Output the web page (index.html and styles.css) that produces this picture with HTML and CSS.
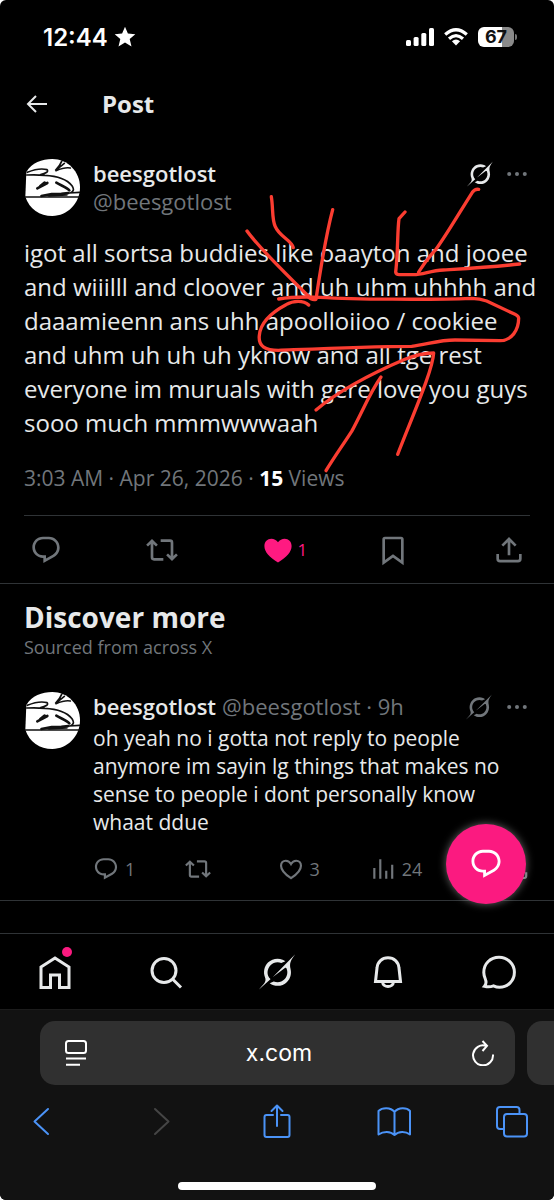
FILE: index.html
```html
<!DOCTYPE html>
<html lang="en">
<head>
<meta charset="utf-8">
<meta name="viewport" content="width=device-width, initial-scale=1">
<title>Post / X</title>
<link rel="stylesheet" href="styles.css">
</head>
<body>
<svg class="defs" aria-hidden="true">
  <symbol id="reply" viewBox="0 0 24 24"><path d="M1.751 10c0-4.42 3.584-8 8.005-8h4.366c4.49 0 8.129 3.64 8.129 8.13 0 2.96-1.607 5.68-4.196 7.11l-8.054 4.46v-3.69h-.067c-4.49.1-8.183-3.51-8.183-8.01zm8.005-6c-3.317 0-6.005 2.69-6.005 6 0 3.37 2.77 6.08 6.138 6.01l.351-.01h1.761v2.3l5.087-2.81c1.951-1.08 3.163-3.13 3.163-5.36 0-3.39-2.744-6.13-6.129-6.13H9.756z"/></symbol>
  <symbol id="repost" viewBox="0 0 24 24"><path class="line" d="M.8 8.7 4.5 5.2 8.2 8.7M4.5 5.5V17.5Q4.5 19 6 19H13M11 5H18Q19.500 5 19.500 6.500V18.500M15.800 15.300 19.500 18.800 23.200 15.300"/></symbol>
  <symbol id="heart" viewBox="0 0 24 24"><path class="line" d="M12 20.500C6 16.600 2.800 13 2.800 9 2.800 6.200 4.700 4.400 7.200 4.400 9.300 4.400 10.900 5.500 12 7.400 13.100 5.500 14.700 4.400 16.800 4.400 19.300 4.400 21.200 6.200 21.200 9 21.200 13 18 16.600 12 20.500Z"/></symbol>
  <symbol id="heart-full" viewBox="0 0 24 24"><path d="M12 21.400C5.500 17.500 1.800 13.400 1.800 9 1.800 5.600 4.100 3.500 7 3.500 9 3.500 10.800 4.400 12 6.200 13.200 4.400 15 3.500 17 3.500 19.900 3.500 22.200 5.600 22.200 9 22.200 13.400 18.500 17.500 12 21.400Z"/></symbol>
  <symbol id="bookmark" viewBox="0 0 24 24"><path class="line" d="M5 21.500V4Q5 3 6 3H18Q19 3 19 4V21.500L12 16.500Z"/></symbol>
  <symbol id="share" viewBox="0 0 24 24"><path class="line" d="M12 16V4M7 8.700 12 3.700 17 8.700M3.500 15V18.500Q3.500 20.300 5.300 20.300H18.700Q20.500 20.300 20.500 18.500V15"/></symbol>
  <symbol id="chart" viewBox="0 0 24 24"><path class="line" d="M4 21V11M9.500 21V3M15 21V13.500M20.500 21V8"/></symbol>
  <symbol id="grok" viewBox="0 0 33 32"><path d="M12.745 20.540l10.970-8.190c.539-.4 1.307-.244 1.564.380 1.349 3.288.746 7.241-1.938 9.955-2.683 2.714-6.417 3.310-9.830 1.954l-3.728 1.745c5.347 3.697 11.840 2.782 15.898-1.324 3.219-3.255 4.216-7.692 3.284-11.693l.008.009c-1.351-5.878.332-8.227 3.782-13.031L33 0l-4.540 4.590v-.014L12.743 20.544m-2.263 1.987c-3.837-3.707-3.175-9.446.1-12.755 2.420-2.449 6.388-3.448 9.852-1.979l3.720-1.737c-.670-.490-1.530-1.017-2.515-1.387-4.455-1.854-9.789-.931-13.410 2.728-3.483 3.523-4.579 8.940-2.697 13.561 1.405 3.454-.899 5.898-3.220 8.364C1.490 30.200.666 31.074 0 32l10.478-9.466"/></symbol>
  <symbol id="dots" viewBox="0 0 24 24"><circle cx="3.500" cy="12" r="2.200"/><circle cx="12" cy="12" r="2.200"/><circle cx="20.500" cy="12" r="2.200"/></symbol>
  <symbol id="face" viewBox="30 27 168 171">
    <path fill="#fff" d="M37 66C53 38 84 27 115 27 160 27 198 64 198 112S160 198 115 198C77 198 46 177 34 140Z"/>
    <g fill="none" stroke="#111" stroke-linecap="round" stroke-width="5">
      <path d="M40 67C62 58 82 54 99 59 105 65 94 71 80 74M38 75C62 74 72 74 92 76 132 78 158 87 174 107 181 117 179 125 170 128M125 60C135 50 140 42 143 34M128 59 151 40M126 62C143 55 154 51 169 54M34 141H196M166 129 196 127"/>
      <path stroke-width="8" d="M70 115 100 99M79 108 92 98M127 98C142 107 157 112 166 121"/>
      <path stroke-width="7" d="M82 138 113 132 142 131 163 129M105 137 158 134"/>
    </g>
  </symbol>
</svg>

<div class="phone">
  <header class="status">
    <div class="clock">12:44
      <svg class="star" viewBox="0 0 22 22"><path d="M11 .8 13.900 7.500 21.300 8.200 15.700 13 17.500 20.500 11 16.600 4.500 20.500 6.300 13 .7 8.200 8.100 7.500Z"/></svg>
    </div>
    <div class="signals">
      <svg class="bars" viewBox="0 0 28 18"><rect y="12" width="5" height="6" rx="1.500"/><rect x="7.600" y="9" width="5" height="9" rx="1.500"/><rect x="15.300" y="5" width="5" height="13" rx="1.500"/><rect x="23" width="5" height="18" rx="1.500"/></svg>
      <svg class="wifi" viewBox="0 0 24 18"><g fill="none" stroke="#fff" stroke-width="3.200"><path d="M1.200 6.500Q12-3 22.800 6.500M5 10.700Q12 4.500 19 10.700"/></g><path d="M7.900 13.200Q12 9.700 16.100 13.200L12 17.600Z"/></svg>
      <div class="battery"><span class="level">67</span></div>
    </div>
  </header>

  <nav class="topbar">
    <button class="icon-btn" aria-label="Back"><svg class="back" viewBox="0 0 22 18"><path d="M21 9H2M10 1 2 9 10 17"/></svg></button>
    <h1>Post</h1>
  </nav>

  <main>
    <article class="post">
      <div class="author">
        <svg class="avatar"><use href="#face"/></svg>
        <div class="names"><strong>beesgotlost</strong><span>@beesgotlost</span></div>
        <button class="icon-btn bright" aria-label="Grok"><svg class="i26"><use href="#grok"/></svg></button>
        <button class="icon-btn" aria-label="More"><svg class="i22"><use href="#dots"/></svg></button>
      </div>
      <p class="body">igot all sortsa buddies like oaayton and jooee<br>and wiiilll and cloover and uh uhm uhhhh and<br>daaamieenn ans uhh apoolloiioo / cookiee<br>and uhm uh uh uh yknow and all tge rest<br>everyone im muruals with gere love you guys<br>sooo much mmmwwwaah</p>
      <p class="meta">3:03 AM · Apr 26, 2026 · <b>15</b> Views</p>
      <div class="actions">
        <button class="icon-btn" aria-label="Reply"><svg class="i32"><use href="#reply"/></svg></button>
        <button class="icon-btn" aria-label="Repost"><svg class="i32"><use href="#repost"/></svg></button>
        <button class="icon-btn liked" aria-label="Liked"><svg class="i32"><use href="#heart-full"/></svg>1</button>
        <button class="icon-btn" aria-label="Bookmark"><svg class="i32"><use href="#bookmark"/></svg></button>
        <button class="icon-btn" aria-label="Share"><svg class="i32"><use href="#share"/></svg></button>
      </div>
      <svg class="scribble" viewBox="0 0 972 930" aria-hidden="true">
        <path d="M124 50C130 85 125 118 136 140 148 170 184 180 190 203"/>
        <path d="M51 153C85 200 150 265 234 347"/>
        <path d="M308 89C292 150 274 250 258 358 248 361 240 356 232 348"/>
        <path d="M525 96 507 116C502 150 504 220 497 276Q498 284 508 284H550C580 284 600 272 640 270 720 265 790 261 869 252"/>
        <path d="M746 28Q735 26 727 37C690 95 650 164 618 208 600 228 588 240 566 276"/>
        <path d="M236 375C220 360 190 361 168 374 138 390 92 420 88 466 84 500 108 511 145 511 270 506 400 500 545 499 590 494 625 480 675 480L810 482C845 482 866 450 866 415Q866 408 855 403L770 363Q750 355 725 355C600 360 370 358 270 352 225 350 175 352 146 357"/>
        <path d="M258 690C330 630 440 574 525 538 560 524 590 519 611 519 608 570 555 690 503 823"/>
        <path d="M453 591C418 640 395 700 365 754 338 796 310 835 288 872"/>
      </svg>
    </article>

    <section class="discover">
      <h2>Discover more</h2>
      <p>Sourced from across X</p>
    </section>

    <article class="reply-post">
      <svg class="avatar"><use href="#face"/></svg>
      <div class="content">
        <div class="line-head">
          <strong>beesgotlost</strong><span>@beesgotlost · 9h</span>
          <button class="icon-btn" aria-label="Grok"><svg class="i26"><use href="#grok"/></svg></button>
          <button class="icon-btn" aria-label="More"><svg class="i22"><use href="#dots"/></svg></button>
        </div>
        <p>oh yeah no i gotta not reply to people<br>anymore im sayin lg things that makes no<br>sense to people i dont personally know<br>whaat ddue</p>
        <div class="small-actions">
          <button class="icon-btn" aria-label="Reply"><svg class="i26"><use href="#reply"/></svg>1</button>
          <button class="icon-btn" aria-label="Repost"><svg class="i26"><use href="#repost"/></svg></button>
          <button class="icon-btn" aria-label="Like"><svg class="i26"><use href="#heart"/></svg>3</button>
          <button class="icon-btn" aria-label="Views"><svg class="i26"><use href="#chart"/></svg>24</button>
          <button class="icon-btn end" aria-label="Share"><svg class="i26"><use href="#share"/></svg></button>
        </div>
      </div>
      <button class="fab" aria-label="Reply"><svg class="i34"><use href="#reply"/></svg></button>
    </article>
  </main>

  <nav class="tabs">
    <a href="#" class="tab" aria-label="Home"><svg class="i36" viewBox="0 0 36 36"><path d="M4 13 18 4 32 13V33.500H22.500V21H13.500V33.500H4Z"/></svg><span class="badge"></span></a>
    <a href="#" class="tab" aria-label="Search"><svg class="i36" viewBox="0 0 36 36"><circle cx="16" cy="16.500" r="12"/><path d="M24.500 25 33 33.500"/></svg></a>
    <a href="#" class="tab" aria-label="Grok"><svg class="i36 solid"><use href="#grok"/></svg></a>
    <a href="#" class="tab" aria-label="Notifications"><svg class="i36" viewBox="0 0 36 36"><path d="M5.500 27.500 7 14C7.500 8 12 3.800 18 3.800S28.500 8 29 14L30.500 27.500ZM12.500 28C13 34 23 34 23.500 28"/></svg></a>
    <a href="#" class="tab" aria-label="Messages"><svg class="i36" viewBox="0 0 36 36"><path d="M3.500 32.300C5.500 30 5.300 27.500 4.300 25 3.200 22.500 2.800 21 2.800 18.500 2.800 9.500 9.500 3.300 18 3.300S33.400 10 33.400 18.300 27 33.300 18.500 33.300C16 33.300 14.500 32.800 12.500 31.800 9.500 33 7 33.200 3.500 32.300Z"/></svg></a>
  </nav>

  <footer class="browser">
    <div class="address-row">
      <div class="address">
        <button class="icon-btn" aria-label="Page settings"><svg class="page-icon" viewBox="0 0 22 26"><rect x="1" y="1" width="20" height="12" rx="2.500"/><path d="M1 18.500H21M1 24.700H15"/></svg></button>
        <input type="text" value="x.com" aria-label="Address">
        <button class="icon-btn" aria-label="Reload"><svg class="reload" viewBox="0 0 24 26"><path d="M15 5.800A10 10 0 1 0 22 14.500M11.500 1 16 5.800 11.500 11"/></svg></button>
      </div>
      <div class="next-tab"></div>
    </div>
    <div class="tools">
      <button class="icon-btn" aria-label="Back"><svg viewBox="0 0 34 34"><path d="M24 5 10.500 17.500 24 30"/></svg></button>
      <button class="icon-btn off" aria-label="Forward"><svg viewBox="0 0 34 34"><path d="M13 5 26.500 17.500 13 30"/></svg></button>
      <button class="icon-btn" aria-label="Share"><svg viewBox="0 0 34 34"><path d="M13 11H6.500Q4.500 11 4.500 13V31Q4.500 33 6.500 33H27.500Q29.500 33 29.500 31V13Q29.500 11 27.500 11H21M17 22V1.500M11.500 7 17 1.500 22.500 7"/></svg></button>
      <button class="icon-btn" aria-label="Bookmarks"><svg viewBox="0 0 34 34"><path d="M17.500 8C13.500 2.800 5 3.500 1.500 7V30.500C6.500 27 13.500 27 17.500 31 21.500 27 28.500 27 33 30.500V7C30 3.500 21.500 2.800 17.500 8ZM17.500 8V31"/></svg></button>
      <button class="icon-btn" aria-label="Tabs"><svg viewBox="0 0 34 34"><path d="M9 25H5Q2 25 2 22V6Q2 3 5 3H21.500Q24.500 3 24.500 6V9"/><rect x="9" y="10" width="23" height="22.500" rx="3"/></svg></button>
    </div>
    <div class="home-bar"></div>
  </footer>
</div>
</body>
</html>
```
FILE: styles.css
```css
* { box-sizing: border-box; }
html { background: #fff; }
body { margin: 0; font-family: "Open Sans", "Noto Sans", sans-serif; color: #e7e9ea; }
h1, h2, p { margin: 0; }
svg { display: block; flex: none; fill: currentColor; }
button { font: inherit; }
.defs { position: absolute; width: 0; height: 0; }
.line { fill: none; stroke: currentColor; stroke-width: 2; }

.phone { min-height: 100vh; background: #000; border-radius: 6px; overflow: hidden; display: flex; flex-direction: column; }
main { flex: 1; }
.icon-btn { display: flex; align-items: center; padding: 0; border: 0; background: none; color: #71767b; white-space: nowrap; }
.bright { color: #e7e9ea; }
.i22 { width: 22px; height: 22px; }
.i26 { width: 26px; height: 26px; }
.i32 { width: 32px; height: 32px; }
.i34 { width: 34px; height: 34px; }
.i36 { width: 36px; height: 36px; }

.status { display: flex; justify-content: space-between; align-items: center; height: 74px; padding: 0 40px 0 43px; color: #fff; font-family: Inter, sans-serif; }
.clock { display: flex; align-items: center; gap: 6px; font-size: 24px; font-weight: 600; }
.star { width: 22px; height: 22px; }
.signals { display: flex; align-items: center; gap: 10px; }
.bars { width: 28px; height: 18px; }
.wifi { width: 24px; height: 18px; }
.battery { position: relative; width: 36px; height: 20px; border-radius: 6px; background: linear-gradient(90deg, #fff 67%, #8a8a8a 67%); }
.battery::after { content: ""; position: absolute; left: 37px; top: 7px; width: 2px; height: 6px; border-radius: 0 2px 2px 0; background: #777; }
.level { display: block; text-align: center; line-height: 20px; font-size: 18px; font-weight: 700; color: #111; }

.topbar { display: flex; align-items: center; gap: 54px; height: 60px; padding: 0 26px; }
.topbar h1 { font-size: 24px; font-weight: 700; line-height: 32px; }
.back { width: 22px; height: 18px; fill: none; stroke: #e7e9ea; stroke-width: 2; }

.post { position: relative; padding: 25px 24px 0; border-bottom: 1px solid #2f3336; }
.avatar { width: 56px; height: 57px; }
.author { display: flex; align-items: flex-start; gap: 13px; padding-right: 2px; }
.author .icon-btn { height: 30px; }
.names { flex: 1; display: flex; flex-direction: column; font-size: 22px; line-height: 28px; }
.names strong, .line-head strong { font-weight: 600; }
.names span, .line-head span { color: #71767b; }
.body { margin-top: 20px; font-size: 24px; line-height: 34px; white-space: nowrap; }
.meta { margin: 24px 0 23px; font-size: 21px; line-height: 28px; color: #71767b; }
.meta b { color: #fff; }
.actions { display: flex; justify-content: space-between; align-items: center; height: 68px; padding: 0 5px 0 6px; border-top: 1px solid #2f3336; }
.actions .icon-btn { width: 32px; gap: 4px; font-size: 17px; }
.actions .liked { color: #ff1a81; }
.scribble { position: absolute; left: 230px; top: 46px; width: 324px; height: 310px; fill: none; stroke: #fb3d31; stroke-width: 10; stroke-linecap: round; stroke-linejoin: round; pointer-events: none; }

.discover { padding: 16px 24px 0; }
.discover h2 { font-size: 28px; line-height: 34px; font-weight: 700; }
.discover p { font-size: 18px; line-height: 26px; color: #71767b; }

.reply-post { position: relative; display: flex; gap: 13px; margin-top: 32px; padding: 0 26px 18px 24px; border-bottom: 1px solid #2f3336; }
.content { flex: 1; font-size: 21px; }
.content p { line-height: 28px; white-space: nowrap; }
.line-head { display: flex; gap: 6px; height: 32px; font-size: 22px; line-height: 28px; }
.line-head span { flex: 1; white-space: nowrap; }
.line-head .icon-btn { height: 30px; }
.line-head .icon-btn + .icon-btn { margin-left: 8px; }
.small-actions { display: grid; grid-template-columns: repeat(4, 1fr) 68px; margin-top: 20px; margin-right: -2px; }
.small-actions .icon-btn { gap: 6px; font-size: 18px; line-height: 26px; }
.small-actions .end { justify-content: flex-end; }
.fab { position: absolute; right: 28px; bottom: -4px; width: 80px; height: 80px; display: flex; align-items: center; justify-content: center; padding: 0; border: 0; border-radius: 50%; background: #fb1a80; color: #fff; box-shadow: 0 0 8px rgba(255, 255, 255, .4); }

.tabs { display: grid; grid-template-columns: repeat(5, 1fr); height: 76px; border-top: 1px solid #2f3336; }
.tab { position: relative; display: flex; align-items: center; justify-content: center; color: #e7e9ea; }
.tab svg { fill: none; stroke: currentColor; stroke-width: 3; }
.tab .solid { fill: currentColor; stroke: none; }
.badge { position: absolute; left: 50%; top: 13px; margin-left: 7px; width: 10px; height: 10px; border-radius: 50%; background: #fb1a80; }

.browser { background: #121212; border-top: 1px solid #1c1c1c; padding: 11px 0 10px; }
.address-row { display: flex; gap: 12px; padding-left: 40px; }
.address { flex: 1; display: flex; align-items: center; height: 64px; padding: 0 20px 0 25px; border-radius: 15px; background: #303030; }
.address .icon-btn { color: #fff; }
.address svg { fill: none; stroke: #fff; stroke-width: 2; }
.address input { flex: 1; min-width: 0; border: 0; background: none; color: #fff; text-align: center; font-family: Inter, sans-serif; font-size: 23px; outline: none; }
.next-tab { width: 27px; border-radius: 15px 0 0 15px; background: #303030; }
.page-icon { width: 22px; height: 26px; }
.reload { width: 24px; height: 26px; }
.tools { display: flex; justify-content: space-between; align-items: center; height: 72px; padding: 0 25px 0 24px; }
.tools .icon-btn { color: #4b93f7; }
.tools .off { color: #454545; }
.tools svg { width: 34px; height: 34px; fill: none; stroke: currentColor; stroke-width: 2; stroke-linejoin: round; stroke-linecap: round; }
.home-bar { width: 198px; height: 8px; margin: 25px auto 0; border-radius: 4px; background: #fff; }
```
